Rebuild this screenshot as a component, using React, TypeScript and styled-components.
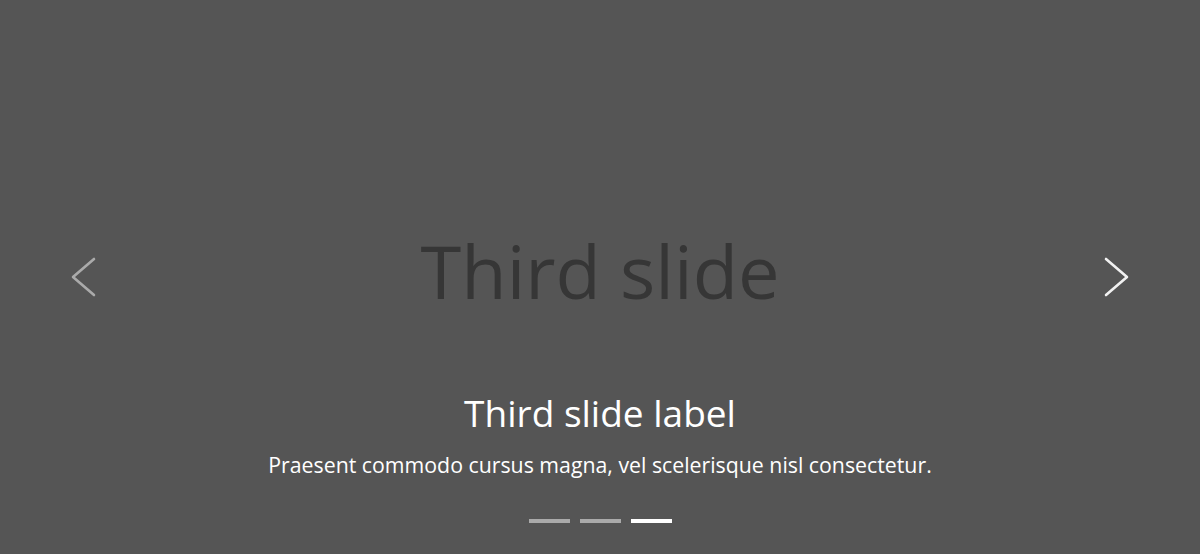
import React, { useState } from 'react'
import styled, { createGlobalStyle } from 'styled-components'

const GlobalStyle = createGlobalStyle`
  html, body {
    margin: 0;
    padding: 0;
    background: #555555;
  }
  body {
    font-family: 'Open Sans', 'Noto Sans', sans-serif;
  }
`

const slides = [
  { name: 'First slide', label: 'First slide label', text: 'Nulla vitae elit libero, a pharetra augue mollis interdum.' },
  { name: 'Second slide', label: 'Second slide label', text: 'Lorem ipsum dolor sit amet, consectetur adipiscing elit.' },
  { name: 'Third slide', label: 'Third slide label', text: 'Praesent commodo cursus magna, vel scelerisque nisl consectetur.' },
]

const Chevron = ({ dir }: { dir: 'prev' | 'next' }) => (
  <svg width="26" height="40" viewBox="0 0 26 40" fill="none">
    <polyline
      points={dir === 'prev' ? '23,2 2,20 23,38' : '3,2 24,20 3,38'}
      stroke="#fff"
      strokeWidth="2.6"
      strokeLinecap="round"
      strokeLinejoin="round"
    />
  </svg>
)

const App = () => {
  const [active, setActive] = useState(2)
  const slide = slides[active]
  const go = (step: number) => setActive((active + step + slides.length) % slides.length)

  return (
    <>
      <GlobalStyle />
      <Carousel>
        <Slide>
          <Placeholder>{slide.name}</Placeholder>
        </Slide>
        <Caption>
          <Label>{slide.label}</Label>
          <Text>{slide.text}</Text>
        </Caption>
        <Control side="left" dim onClick={() => go(-1)} aria-label="Previous">
          <Chevron dir="prev" />
        </Control>
        <Control side="right" onClick={() => go(1)} aria-label="Next">
          <Chevron dir="next" />
        </Control>
        <Indicators>
          {slides.map((s, i) => (
            <Indicator key={s.name} active={i === active} onClick={() => setActive(i)} aria-label={s.name} />
          ))}
        </Indicators>
      </Carousel>
    </>
  )
}

const Carousel = styled.div`
  position: relative;
  width: 100%;
  height: 554px;
  overflow: hidden;
  background: #555555;
`
const Slide = styled.div`
  width: 100%;
  height: 100%;
  display: flex;
  align-items: center;
  justify-content: center;
`
const Placeholder = styled.div`
  font-size: 74px;
  line-height: 1;
  color: #363636;
  margin-top: -13px;
`
const Caption = styled.div`
  position: absolute;
  left: 15%;
  right: 15%;
  bottom: 73px;
  display: flex;
  flex-direction: column;
  align-items: center;
  color: #ffffff;
  text-align: center;
`
const Label = styled.h5`
  margin: 0 0 14px;
  font-size: 37px;
  font-weight: 400;
  line-height: 1.2;
`
const Text = styled.p`
  margin: 0;
  font-size: 21.3px;
  line-height: 1.5;
`
const Control = styled.button<{ side: 'left' | 'right'; dim?: boolean }>`
  position: absolute;
  top: 0;
  bottom: 0;
  ${(p) => (p.side === 'left' ? 'left: 0;' : 'right: 0;')}
  width: 168px;
  padding: 0;
  border: 0;
  background: none;
  display: flex;
  align-items: center;
  justify-content: center;
  cursor: pointer;
  opacity: ${(p) => (p.dim ? 0.5 : 0.92)};
`
const Indicators = styled.div`
  position: absolute;
  left: 0;
  right: 0;
  bottom: 31px;
  display: flex;
  justify-content: center;
  gap: 10px;
`
const Indicator = styled.button<{ active: boolean }>`
  width: 41px;
  height: 4px;
  padding: 0;
  border: 0;
  background: #ffffff;
  opacity: ${(p) => (p.active ? 1 : 0.5)};
  cursor: pointer;
`

export default App
